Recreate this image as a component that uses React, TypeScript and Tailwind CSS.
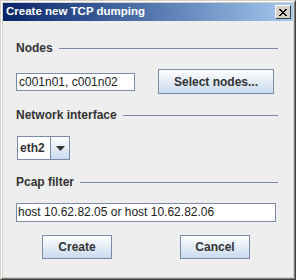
const font = { fontFamily: '"Liberation Sans", Arial, sans-serif' };

function SectionLabel({ text }: { text: string }) {
    return (
        <div className="flex items-center h-[14px]">
            <span className="text-[12px] font-bold text-[#333333] leading-[14px]">{text}</span>
            <div className="flex-1 ml-[6px] h-px bg-[#7a8aa8]" />
        </div>
    );
}

function JButton({ label, className }: { label: string; className: string }) {
    return (
        <button
            className={`border border-[#7a8aa8] bg-gradient-to-b from-white to-[#c9daee] text-[12px] font-bold text-[#333333] ${className}`}
        >
            {label}
        </button>
    );
}

export default function App() {
    return (
        <div
            style={font}
            className="w-[296px] h-[280px] border border-[#d4d0c8] border-r-[#404040] border-b-[#404040]"
        >
            <div className="h-full border border-white border-r-[#808080] border-b-[#808080] bg-[#d4d0c8] p-px flex flex-col">
                <div className="h-[18px] flex items-center justify-between bg-gradient-to-r from-[#0a246a] to-[#a6caf0] pl-[3px] pr-[2px]">
                    <span className="text-white text-[11.5px] font-bold leading-none">Create new TCP dumping</span>
                    <div className="w-[16px] h-[14px] bg-[#d4d0c8] border border-white border-r-[#404040] border-b-[#404040] flex items-center justify-center">
                        <svg width="8" height="7" viewBox="0 0 8 7">
                            <path d="M0 0L7 7M1 0L8 7M7 0L0 7M8 0L1 7" stroke="#000" strokeWidth="1" />
                        </svg>
                    </div>
                </div>

                <div className="flex-1 bg-[#eeeeee] pl-[13px] pr-[15px] pt-[20px] flex flex-col">
                    <SectionLabel text="Nodes" />
                    <div className="mt-[14px] h-[25px] flex items-center">
                        <div className="w-[119px] h-[18px] border border-[#7a8aa8] bg-white text-[12px] leading-[16px] pl-[2px] text-[#222222]">
                            c001n01, c001n02
                        </div>
                        <JButton label="Select nodes..." className="ml-[23px] w-[116px] h-[25px]" />
                    </div>

                    <div className="mt-[14px]">
                        <SectionLabel text="Network interface" />
                    </div>
                    <div className="mt-[14px] ml-px w-[53px] h-[24px] flex border border-[#7a8aa8]">
                        <div className="w-[33px] bg-white flex items-center pl-[2px] text-[12px] font-bold text-[#333333] border-r border-[#7a8aa8]">
                            eth2
                        </div>
                        <div className="flex-1 bg-gradient-to-b from-white to-[#c9daee] flex items-center justify-center">
                            <svg width="9" height="5" viewBox="0 0 9 5">
                                <path d="M0 0H9L4.5 5Z" fill="#333333" />
                            </svg>
                        </div>
                    </div>

                    <div className="mt-[15px]">
                        <SectionLabel text="Pcap filter" />
                    </div>
                    <div className="mt-[14px] w-[260px] h-[19px] border border-[#7a8aa8] bg-white text-[12px] leading-[17px] pl-px text-[#222222]">
                        host 10.62.82.05 or host 10.62.82.06
                    </div>

                    <div className="mt-[13px] flex">
                        <JButton label="Create" className="ml-[26px] w-[70px] h-[24px]" />
                        <JButton label="Cancel" className="ml-[68px] w-[70px] h-[24px]" />
                    </div>
                </div>
            </div>
        </div>
    );
}
